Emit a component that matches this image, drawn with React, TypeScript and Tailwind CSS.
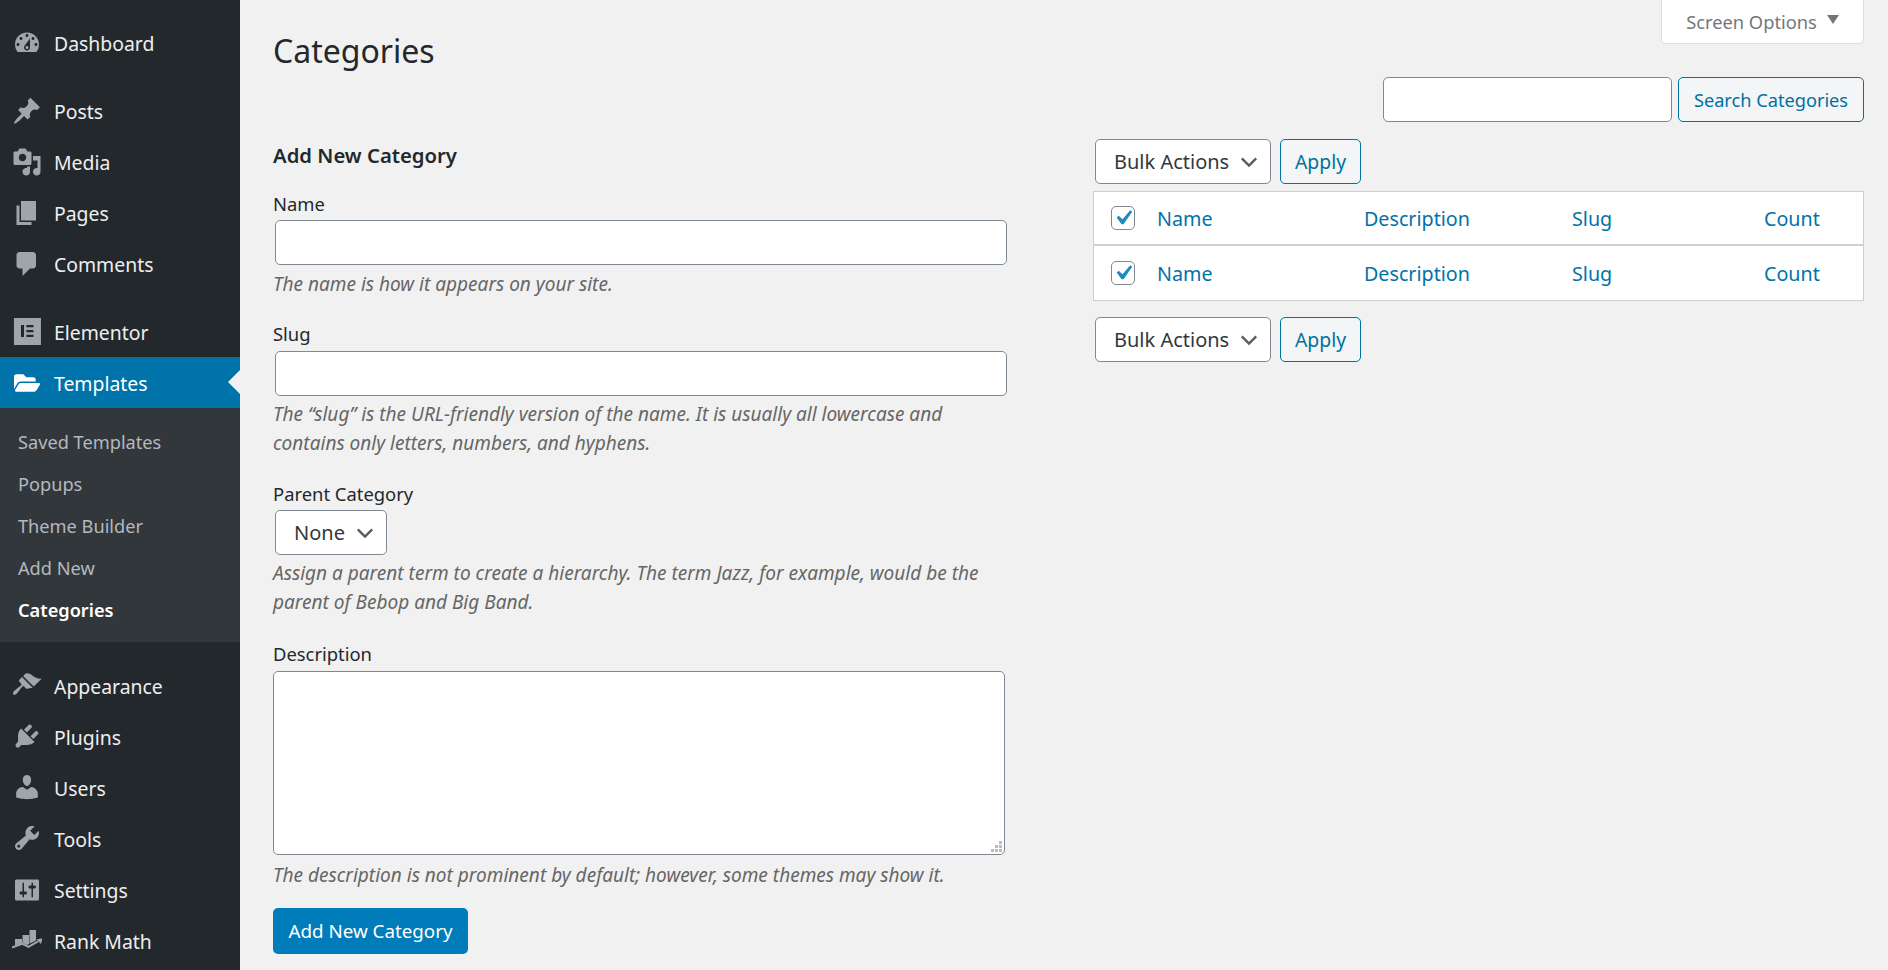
import type { ReactNode } from "react";
import { FaFolderOpen } from "react-icons/fa";

const Dash = ({ d }: { d: string }) => (
  <svg viewBox="0 0 20 20" className="w-[30px] h-[30px] fill-[#a0a5aa]" fillRule="evenodd">
    <path d={d} />
  </svg>
);

const ElementorIcon = () => (
  <svg viewBox="0 0 20 20" className="w-[30px] h-[30px]">
    <path fill="#a0a5aa" fillRule="evenodd" d="M1.3.7h18v18h-18zM6 5.3v8h2v-8zM9.6 5.3v1.5h4.7V5.3zM9.6 8.6v1.5h4.7V8.6zM9.6 11.8v1.5h4.7v-1.5z" />
  </svg>
);

const RankMathIcon = () => (
  <svg viewBox="0 0 30 30" className="w-[30px] h-[30px]">
    <path fill="#a0a5aa" d="M3 13h7v4l-7 2.5zM10.5 9h6.5v9l-2 1-4.5-2.2zM17.5 4H24v10.5l-5 2.5-1.5.7z" />
    <path fill="none" stroke="#a0a5aa" strokeWidth="2" d="M0 21.5l10-3.8 6.5 3.2 9.5-5.5" />
    <path fill="#a0a5aa" d="M24.5 13.5l6-1.5-1.5 6z" />
  </svg>
);

const icons: Record<string, ReactNode> = {
  Dashboard: <Dash d="M3.76 16h12.48c1.1-1.37 1.76-3.11 1.76-5 0-4.42-3.58-8-8-8s-8 3.58-8 8c0 1.89.66 3.63 1.76 5zM10 4c.55 0 1 .45 1 1s-.45 1-1 1-1-.45-1-1 .45-1 1-1zM6 6c.55 0 1 .45 1 1s-.45 1-1 1-1-.45-1-1 .45-1 1-1zm8 0c.55 0 1 .45 1 1s-.45 1-1 1-1-.45-1-1 .45-1 1-1zm-5.37 5.55L12 7v6c0 1.1-.9 2-2 2s-2-.9-2-2c0-.57.24-1.08.63-1.45zM4 10c.55 0 1 .45 1 1s-.45 1-1 1-1-.45-1-1 .45-1 1-1zm12 0c.55 0 1 .45 1 1s-.45 1-1 1-1-.45-1-1 .45-1 1-1zm-5 3c0-.55-.45-1-1-1s-1 .45-1 1 .45 1 1 1 1-.45 1-1z" />,
  Posts: <Dash d="M10.44 3.02l1.82-1.82 6.36 6.35-1.83 1.82c-1.05-.68-2.48-.57-3.41.36l-.75.75c-.92.93-1.04 2.35-.35 3.41l-1.83 1.82-2.41-2.41-2.8 2.79c-.42.42-3.38 2.71-3.8 2.29s1.86-3.39 2.28-3.81l2.79-2.79L4.1 9.36l1.83-1.82c1.05.69 2.48.57 3.4-.36l.75-.75c.93-.92 1.05-2.35.36-3.41z" />,
  Media: <Dash d="M13 11V4c0-.55-.45-1-1-1h-1.67L9 1H5L3.67 3H2c-.55 0-1 .45-1 1v7c0 .55.45 1 1 1h10c.55 0 1-.45 1-1zM7 4.5c1.38 0 2.5 1.12 2.5 2.5S8.38 9.5 7 9.5 4.5 8.38 4.5 7 5.62 4.5 7 4.5zM14 6h5v10.5c0 1.38-1.12 2.5-2.5 2.5S14 17.88 14 16.5s1.12-2.5 2.5-2.5c.17 0 .34.02.5.05V9h-3V6zm-4 8.05V13h2v3.5c0 1.38-1.12 2.5-2.5 2.5S7 17.88 7 16.5 8.12 14 9.5 14c.17 0 .34.02.5.05z" />,
  Pages: <Dash d="M6 15V2h10v13H6zm-1 1h8v2H3V5h2v11z" />,
  Comments: <Dash d="M5 2h9c1.1 0 2 .9 2 2v7c0 1.1-.9 2-2 2h-2l-5 5v-5H5c-1.1 0-2-.9-2-2V4c0-1.1.9-2 2-2z" />,
  Elementor: <ElementorIcon />,
  Templates: <FaFolderOpen className="w-[26px] h-[26px] text-white ml-[2px]" />,
  Appearance: <Dash d="M14.48 11.06L7.41 3.99l1.5-1.5c.5-.56 2.3-.47 3.51.32 1.21.8 1.43 1.28 2.91 2.1 1.18.64 2.45 1.26 4.45.85zm-.71.71L6.7 4.7 4.93 6.47c-.39.39-.39 1.02 0 1.41l1.06 1.06c.39.39.39 1.03 0 1.42-.6.6-1.43 1.11-2.21 1.7-.78.59-1.58 1.23-2.36 2-.72.71-.98 1.74-.51 2.21.47.47 1.5.21 2.21-.51.77-.78 1.41-1.58 2-2.36.59-.78 1.1-1.61 1.7-2.21.39-.39 1.03-.39 1.42 0l1.06 1.06c.39.39 1.02.39 1.41 0z" />,
  Plugins: <Dash d="M13.11 4.36L9.87 7.6 8 5.73l3.24-3.24c.35-.34 1.05-.2 1.56.32.52.51.66 1.21.31 1.55zm-8 1.77l.91-1.12 9.01 9.01-1.19.84c-.71.71-2.63 1.16-3.82 1.16H6.14L4.9 17.26c-.59.59-1.54.59-2.12 0-.59-.58-.59-1.53 0-2.12l1.24-1.24v-3.88c0-1.13.4-3.19 1.09-3.89zm7.26 3.97l3.24-3.24c.34-.35 1.04-.21 1.55.31.52.51.66 1.21.31 1.55l-3.24 3.25z" />,
  Users: <Dash d="M10 9.25c-2.27 0-2.73-3.44-2.73-3.44C7 4.02 7.82 2 9.97 2c2.16 0 2.98 2.02 2.71 3.81 0 0-.41 3.44-2.68 3.44zm0 2.57L12.72 10c2.39 0 4.52 2.33 4.52 4.53v2.49s-3.65 1.13-7.24 1.13c-3.65 0-7.24-1.13-7.24-1.13v-2.49c0-2.25 1.94-4.48 4.47-4.48z" />,
  Tools: <Dash d="M16.68 9.77c-1.34 1.34-3.3 1.67-4.95.99l-5.41 6.52c-.99.99-2.59.99-3.58 0s-.99-2.59 0-3.57l6.52-5.42c-.68-1.65-.35-3.61.99-4.95 1.28-1.28 3.12-1.62 4.72-1.06l-2.89 2.89 2.82 2.82 2.86-2.87c.53 1.58.18 3.39-1.08 4.67zM3.81 16.21c.4.39 1.04.39 1.43 0 .4-.4.4-1.04 0-1.43-.39-.4-1.03-.4-1.43 0-.39.39-.39 1.03 0 1.43z" />,
  Settings: <Dash d="M18 16V4c0-.55-.45-1-1-1H3c-.55 0-1 .45-1 1v12c0 .55.45 1 1 1h14c.55 0 1-.45 1-1zM8 11h1c.55 0 1 .45 1 1s-.45 1-1 1H8v1.5c0 .28-.22.5-.5.5s-.5-.22-.5-.5V13H6c-.55 0-1-.45-1-1s.45-1 1-1h1V5.5c0-.28.22-.5.5-.5s.5.22.5.5V11zm5-2h-1c-.55 0-1-.45-1-1s.45-1 1-1h1V5.5c0-.28.22-.5.5-.5s.5.22.5.5V7h1c.55 0 1 .45 1 1s-.45 1-1 1h-1v5.5c0 .28-.22.5-.5.5s-.5-.22-.5-.5V9z" />,
  "Rank Math": <RankMathIcon />,
};

function MenuItem({ name, active }: { name: string; active?: boolean }) {
  return (
    <div
      className={`relative flex items-center h-[51.1px] pl-[12px] gap-[12px] ${
        active ? "bg-[#0073aa] text-white" : "text-[#eeeeee]"
      }`}
    >
      <span className="flex items-center w-[30px] h-[30px]">{icons[name]}</span>
      <span className="pt-[2px]">{name}</span>
      {active && (
        <span className="absolute right-0 top-[13px] border-y-[12px] border-r-[12px] border-y-transparent border-r-[#f1f1f1]" />
      )}
    </div>
  );
}

function Sidebar() {
  const sub = ["Saved Templates", "Popups", "Theme Builder", "Add New"];
  return (
    <aside className="w-[240px] shrink-0 bg-[#23282d] pt-[17px] text-[19.4px]">
      <MenuItem name="Dashboard" />
      <div className="h-[17px]" />
      <MenuItem name="Posts" />
      <MenuItem name="Media" />
      <MenuItem name="Pages" />
      <MenuItem name="Comments" />
      <div className="h-[16.5px]" />
      <MenuItem name="Elementor" />
      <MenuItem name="Templates" active />
      <div className="bg-[#32373c] pt-[12.5px] pb-[11px] text-[18.2px] text-[#b4b9be]">
        {sub.map((s) => (
          <div key={s} className="h-[42px] flex items-center pl-[18px] pt-[2px]">
            {s}
          </div>
        ))}
        <div className="h-[42px] flex items-center pl-[18px] pt-[2px] font-semibold text-white">Categories</div>
      </div>
      <div className="h-[18px]" />
      <MenuItem name="Appearance" />
      <MenuItem name="Plugins" />
      <MenuItem name="Users" />
      <MenuItem name="Tools" />
      <MenuItem name="Settings" />
      <MenuItem name="Rank Math" />
    </aside>
  );
}

const Chevron = () => (
  <svg viewBox="0 0 20 20" className="w-[24px] h-[24px] fill-none stroke-[#555d66] stroke-2">
    <path d="M4 7l6 6 6-6" />
  </svg>
);

function SelectBox({ label, className }: { label: string; className: string }) {
  return (
    <div
      className={`h-[45px] flex items-center justify-between pl-[18px] pr-[9px] bg-white border border-[#7e8993] rounded-[5px] text-[#32373c] text-[20px] ${className}`}
    >
      <span>{label}</span>
      <Chevron />
    </div>
  );
}

const Check = () => (
  <span className="w-[24px] h-[24px] shrink-0 bg-white border border-[#7e8993] rounded-[5px] flex items-center justify-center">
    <svg viewBox="0 0 20 20" className="w-[30px] h-[30px] fill-[#1e8cbe] shrink-0">
      <path d="M14.83 4.89l1.34.94-5.81 8.38H9.02L5.78 9.67l1.34-1.25 2.57 2.4z" />
    </svg>
  </span>
);

function Row({ className }: { className: string }) {
  return (
    <div className={`flex items-center text-[#0073aa] text-[19.7px] ${className}`}>
      <span className="w-[63px] pl-[17px] shrink-0">
        <Check />
      </span>
      <span className="w-[207px] pt-[2px]">Name</span>
      <span className="w-[208px] pt-[2px]">Description</span>
      <span className="w-[192px] pt-[2px]">Slug</span>
      <span className="pt-[2px]">Count</span>
    </div>
  );
}

function BulkBar({ className }: { className: string }) {
  return (
    <div className={`flex gap-[9px] ml-[2px] ${className}`}>
      <SelectBox label="Bulk Actions" className="w-[176px]" />
      <button className="h-[45px] w-[81px] bg-[#f3f5f6] border border-[#0071a1] rounded-[5px] text-[#0071a1] text-[19.4px]">
        Apply
      </button>
    </div>
  );
}

const Help = ({ children, className = "" }: { children: ReactNode; className?: string }) => (
  <p className={`italic text-[#666666] text-[19.05px] leading-[29px] ${className}`}>{children}</p>
);

const fieldClass = "block bg-white border border-[#7e8993] rounded-[5px] outline-none";

function FormColumn() {
  return (
    <section className="w-[853px] shrink-0 pl-[33px]">
      <h1 className="text-[32px] leading-[46px] text-[#23282d] mt-[28px]">Categories</h1>
      <h2 className="font-semibold text-[#23282d] text-[20.3px] leading-[26px] mt-[68px]">Add New Category</h2>

      <label className="block text-[18.4px] leading-[26px] mt-[23px]">Name</label>
      <input className={`${fieldClass} w-[732px] h-[45px] ml-[2px] mt-[3px]`} />
      <Help className="mt-[5px]">The name is how it appears on your site.</Help>

      <label className="block text-[18.4px] leading-[26px] mt-[22px]">Slug</label>
      <input className={`${fieldClass} w-[732px] h-[45px] ml-[2px] mt-[4px]`} />
      <Help className="mt-[4px]">
        The “slug” is the URL-friendly version of the name. It is usually all lowercase and
        <br />
        contains only letters, numbers, and hyphens.
      </Help>

      <label className="block text-[18.4px] leading-[26px] mt-[23px]">Parent Category</label>
      <SelectBox label="None" className="w-[112px] ml-[2px] mt-[3px]" />
      <Help className="mt-[4px]">
        Assign a parent term to create a hierarchy. The term Jazz, for example, would be the
        <br />
        parent of Bebop and Big Band.
      </Help>

      <label className="block text-[18.4px] leading-[26px] mt-[24px]">Description</label>
      <div className="relative w-[732px] mt-[4px]">
        <textarea className={`${fieldClass} w-full h-[184px] resize-none`} />
        <span className="absolute right-[3px] bottom-[3px] grid grid-cols-3 gap-px w-[11px]">
          <i className="size-[3px]" />
          <i className="size-[3px]" />
          <i className="size-[3px] bg-[#bbbbbb]" />
          <i className="size-[3px]" />
          <i className="size-[3px] bg-[#bbbbbb]" />
          <i className="size-[3px] bg-[#bbbbbb]" />
          <i className="size-[3px] bg-[#bbbbbb]" />
          <i className="size-[3px] bg-[#bbbbbb]" />
          <i className="size-[3px] bg-[#bbbbbb]" />
        </span>
      </div>
      <Help className="mt-[6px]">The description is not prominent by default; however, some themes may show it.</Help>

      <button className="mt-[18px] h-[46px] w-[195px] bg-[#007cba] rounded-[5px] text-white text-[18.8px]">
        Add New Category
      </button>
    </section>
  );
}

function ListColumn() {
  return (
    <section className="flex-1 pr-[24px] flex flex-col">
      <div className="flex justify-end">
        <div className="w-[203px] h-[44px] bg-white border border-t-0 border-[#dddddd] rounded-b-[5px] flex items-center justify-center gap-[10px] text-[#72777c] text-[18.3px]">
          <span>Screen Options</span>
          <span className="w-0 h-0 mb-[4px] border-x-[6px] border-t-[9px] border-x-transparent border-t-[#72777c]" />
        </div>
      </div>
      <div className="flex justify-end gap-[6px] mt-[33px]">
        <input className={`${fieldClass} w-[289px] h-[45px]`} />
        <button className="h-[45px] w-[186px] bg-[#f3f5f6] border border-[#0071a1] rounded-[5px] text-[#0071a1] text-[18.2px] pt-[2px]">
          Search Categories
        </button>
      </div>
      <BulkBar className="mt-[17px]" />
      <div className="mt-[7px] bg-white border border-[#ccd0d4]">
        <Row className="h-[54px] border-b-2 border-[#ccd0d4]" />
        <Row className="h-[54px]" />
      </div>
      <BulkBar className="mt-[16px]" />
    </section>
  );
}

export default function App() {
  return (
    <div className="flex w-[1888px] h-[970px] overflow-hidden bg-[#f1f1f1] text-[19px] text-[#23282d] font-['Noto_Sans','Open_Sans',sans-serif]">
      <Sidebar />
      <main className="flex flex-1 min-w-0">
        <FormColumn />
        <ListColumn />
      </main>
    </div>
  );
}
